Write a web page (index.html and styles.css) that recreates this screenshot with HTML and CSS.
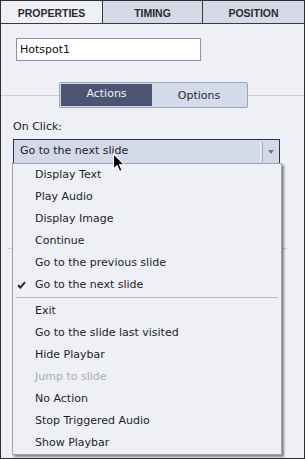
FILE: index.html
```html
<!DOCTYPE html>
<html>
<head>
<meta charset="utf-8">
<link rel="stylesheet" href="styles.css">
</head>
<body>
<div class="panel">
  <div class="tabs">
    <div class="tab active">PROPERTIES</div>
    <div class="tab">TIMING</div>
    <div class="tab">POSITION</div>
  </div>
  <div class="content">
    <div class="name">Hotspot1</div>
    <div class="seg-row">
      <div class="hline"></div>
      <div class="seg">
        <div class="seg-on">Actions</div>
        <div class="seg-off">Options</div>
      </div>
      <div class="hline"></div>
    </div>
    <div class="label">On Click:</div>
    <div class="select">
      <span class="select-text">Go to the next slide</span>
      <span class="select-sep"></span>
      <span class="select-btn"><span class="arrow"></span></span>
    </div>
    <div class="divider"></div>
  </div>

  <ul class="menu">
    <li class="item">Display Text</li>
    <li class="item">Play Audio</li>
    <li class="item">Display Image</li>
    <li class="item">Continue</li>
    <li class="item">Go to the previous slide</li>
    <li class="item checked"><svg class="check" width="9" height="8" viewBox="0 0 9 8"><path d="M1 4.2 L3.4 6.6 L8 1.2" fill="none" stroke="#2a2a35" stroke-width="2"/></svg>Go to the next slide</li>
    <li class="sep"></li>
    <li class="item">Exit</li>
    <li class="item">Go to the slide last visited</li>
    <li class="item">Hide Playbar</li>
    <li class="item disabled">Jump to slide</li>
    <li class="item">No Action</li>
    <li class="item">Stop Triggered Audio</li>
    <li class="item">Show Playbar</li>
  </ul>

  <svg class="cursor" width="13" height="20" viewBox="0 0 12 18"><path d="M0.5 0.5 L0.5 14.5 L3.8 11.4 L6.2 16.8 L8.4 15.8 L6 10.6 L10.4 10.6 Z" fill="#000" stroke="#fff" stroke-width="1" stroke-linejoin="miter"/></svg>
</div>
</body>
</html>
```
FILE: styles.css
```css
html, body {
  margin: 0;
  padding: 0;
  background: #eef0f5;
}

.panel {
  position: relative;
  width: 305px;
  height: 459px;
  box-sizing: border-box;
  border: 1px solid #2e2e2e;
  background: #eef0f5;
  font-family: "DejaVu Sans", sans-serif;
  font-size: 11px;
  color: #1d1d2b;
  overflow: hidden;
}

.tabs {
  display: grid;
  grid-template-columns: 101px 100px 1fr;
  height: 23px;
  box-sizing: border-box;
  border-bottom: 1px solid #3a3a3a;
}

.tab {
  display: flex;
  align-items: center;
  justify-content: center;
  background: #d5dae6;
  color: #2a2a2a;
  font-family: "Liberation Sans", sans-serif;
  font-weight: bold;
  font-size: 10.5px;
  padding-top: 1px;
}

.tab + .tab {
  border-left: 1px solid #3a3a3a;
}

.tab.active {
  background: #eef0f5;
}

.content {
  padding: 14px 0 0 12px;
}

.name {
  margin-left: 3px;
  width: 185px;
  height: 23px;
  box-sizing: border-box;
  border: 1px solid #8b93ab;
  background: #fff;
  padding-left: 3px;
  display: flex;
  align-items: center;
  color: #111;
}

.seg-row {
  margin-top: 21px;
  margin-left: -12px;
  display: grid;
  grid-template-columns: 58px 189px 1fr;
  align-items: center;
  height: 26px;
}

.hline {
  height: 1px;
  background: #c9cdd7;
}

.seg {
  height: 26px;
  box-sizing: border-box;
  border: 1px solid #9ca4bd;
  border-radius: 2px;
  background: #d4dbea;
  padding: 1px;
  display: flex;
}

.seg-on {
  width: 91px;
  background: #4b5572;
  color: #eef1f8;
  text-align: center;
  line-height: 20px;
  padding-bottom: 2px;
  box-sizing: border-box;
  height: 22px;
}

.seg-off {
  flex: 1;
  text-align: center;
  line-height: 22px;
  color: #2a2a3a;
  padding-top: 1px;
  box-sizing: border-box;
}

.label {
  margin-top: 12px;
  line-height: 14px;
  color: #222;
}

.select {
  margin-top: 5px;
  width: 267px;
  height: 25px;
  box-sizing: border-box;
  border: 1px solid #2c3350;
  background: #d3d9e8;
  display: flex;
  align-items: center;
  padding-left: 6px;
}

.select-text {
  flex: 1;
  padding-bottom: 3px;
  color: #1d1d2b;
}

.select-sep {
  width: 1px;
  height: 20px;
  border-left: 1px solid #f4f6fb;
  border-right: 1px solid #aeb4c5;
}

.select-btn {
  width: 16px;
  display: flex;
  justify-content: center;
  align-items: center;
}

.arrow {
  width: 0;
  height: 0;
  border-left: 3.5px solid transparent;
  border-right: 3.5px solid transparent;
  border-top: 4px solid #6f7690;
}

.divider {
  margin-top: 84px;
  margin-left: -5px;
  width: 279px;
  height: 1px;
  background: #c9cdd7;
}

.menu {
  position: absolute;
  left: 11px;
  top: 162px;
  width: 270px;
  box-sizing: border-box;
  margin: 0;
  padding: 0;
  list-style: none;
  border: 1px solid #9fa3b2;
  background: #eef0f5;
  box-shadow: 2px 2px 2px rgba(0, 0, 0, 0.45);
}

.item {
  position: relative;
  height: 22px;
  line-height: 22px;
  padding-left: 22px;
  color: #1d1d2b;
  white-space: nowrap;
}

.item.disabled {
  color: #a9adb9;
}

.check {
  position: absolute;
  left: 4px;
  top: 7px;
}

.sep {
  height: 1px;
  margin: 1px 3px 2px;
  background: #b6bac6;
}

.cursor {
  position: absolute;
  left: 112px;
  top: 152px;
}
```
